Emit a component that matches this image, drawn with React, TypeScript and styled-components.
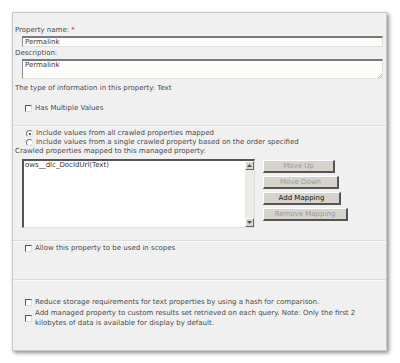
import React from "react";
import styled, { createGlobalStyle } from "styled-components";

const Global = createGlobalStyle`
  html, body { margin: 0; padding: 0; background: #ffffff; }
  body { font-family: "DejaVu Sans", Verdana, sans-serif; }
`;

const Page = styled.div`
  width: 400px;
  height: 363px;
  padding: 12px 0 0 12px;
  box-sizing: border-box;
`;

const Panel = styled.div`
  width: 375px;
  height: 339px;
  box-sizing: border-box;
  background: #f0f0f0;
  border: 1px solid #c8c8c8;
  box-shadow: 2px 2px 4px rgba(0, 0, 0, 0.45);
  display: flex;
  flex-direction: column;
  font-size: 7px;
  color: #4a4a4a;
  line-height: 9px;
`;

const Section = styled.div<{ $pt?: number; $h?: number }>`
  padding: ${(p) => p.$pt ?? 0}px 4px 0 2px;
  height: ${(p) => (p.$h ? `${p.$h}px` : "auto")};
  box-sizing: border-box;
  display: flex;
  flex-direction: column;
`;

const Sep = styled.div`
  height: 1px;
  background: #dcdcdc;
  border-bottom: 1px solid #fafafa;
`;

const Label = styled.div<{ $mt?: number }>`
  margin-top: ${(p) => p.$mt ?? 0}px;
  height: 9px;
  white-space: nowrap;
`;

const Req = styled.span`
  color: #d02020;
`;

const TextBox = styled.div<{ $h: number; $mt?: number }>`
  margin: ${(p) => p.$mt ?? 1}px 0 0 7px;
  width: 361px;
  height: ${(p) => p.$h}px;
  box-sizing: border-box;
  background: #fcfcfa;
  border-top: 2px solid #7a7a7a;
  border-left: 1px solid #8a8a8a;
  border-right: 1px solid #e2e2dc;
  border-bottom: 1px solid #e2e2dc;
  padding: 0 2px;
  color: #4a3c20;
  line-height: 8px;
  position: relative;
`;

const Grip = styled.svg`
  position: absolute;
  right: 0;
  bottom: 0;
`;

const CheckRow = styled.div<{ $mt?: number; $pl?: number }>`
  margin-top: ${(p) => p.$mt ?? 0}px;
  padding-left: ${(p) => p.$pl ?? 10}px;
  display: flex;
  align-items: center;
  gap: 3px;
  height: 9px;
  white-space: nowrap;
`;

const Box = styled.span`
  width: 7px;
  height: 7px;
  box-sizing: border-box;
  flex: none;
  background: #ffffff;
  border-top: 1px solid #555;
  border-left: 1px solid #555;
  border-right: 1px solid #dcdcdc;
  border-bottom: 1px solid #dcdcdc;
`;

const Radio = styled.span<{ $on?: boolean }>`
  width: 7px;
  height: 7px;
  box-sizing: border-box;
  flex: none;
  border-radius: 50%;
  background: #ffffff;
  border: 1px solid #777;
  border-right-color: #ddd;
  border-bottom-color: #ddd;
  position: relative;
  &::after {
    content: "";
    display: ${(p) => (p.$on ? "block" : "none")};
    position: absolute;
    left: 1.5px;
    top: 1.5px;
    width: 2px;
    height: 2px;
    border-radius: 50%;
    background: #222;
  }
`;

const MultiRow = styled.div`
  margin-top: 1px;
  padding-left: 10px;
  display: flex;
  align-items: center;
  gap: 3px;
  line-height: 10px;
`;

const MapArea = styled.div`
  margin: 3px 0 0 7px;
  display: flex;
  gap: 8px;
  align-items: flex-start;
`;

const ListBox = styled.div`
  width: 233px;
  height: 69px;
  box-sizing: border-box;
  background: #ffffff;
  border-top: 2px solid #555;
  border-left: 2px solid #555;
  border-right: 1px solid #e0e0e0;
  border-bottom: 1px solid #e0e0e0;
  display: flex;
`;

const ListItems = styled.div`
  flex: 1;
  padding: 0 1px;
  color: #333;
  line-height: 8px;
`;

const Scroll = styled.div`
  width: 9px;
  display: flex;
  flex-direction: column;
  justify-content: space-between;
  background: #ecebe6;
`;

const Arrow = styled.div`
  width: 9px;
  height: 9px;
  box-sizing: border-box;
  background: #d8d5ce;
  border-top: 1px solid #fff;
  border-left: 1px solid #fff;
  border-right: 1px solid #666;
  border-bottom: 1px solid #666;
  display: flex;
  align-items: center;
  justify-content: center;
`;

const Buttons = styled.div`
  margin-top: 1px;
  display: flex;
  flex-direction: column;
  gap: 3px;
  align-items: flex-start;
`;

const Btn = styled.div<{ $w: number; $off?: boolean }>`
  width: ${(p) => p.$w}px;
  height: 13px;
  box-sizing: border-box;
  background: #d6d3cc;
  border-top: 1px solid #ffffff;
  border-left: 1px solid #ffffff;
  border-right: 2px solid #555;
  border-bottom: 2px solid #555;
  color: ${(p) => (p.$off ? "#9a9a9a" : "#111")};
  font-size: 7px;
  line-height: 10px;
  text-align: center;
  white-space: nowrap;
`;

function Tri({ up }: { up?: boolean }) {
  return (
    <svg width="5" height="3" viewBox="0 0 5 3">
      <path d={up ? "M0 3 L2.5 0 L5 3 Z" : "M0 0 L2.5 3 L5 0 Z"} fill="#555" />
    </svg>
  );
}

export default function App() {
  return (
    <>
      <Global />
      <Page>
        <Panel>
          <Section $pt={13} $h={112}>
            <Label>
              Property name: <Req>*</Req>
            </Label>
            <TextBox $h={11}>Permalink</TextBox>
            <Label $mt={2}>Description:</Label>
            <TextBox $h={20}>
              Permalink
              <Grip width="5" height="5" viewBox="0 0 5 5">
                <path d="M1 5 L5 1 M3 5 L5 3" stroke="#999" strokeWidth="0.7" />
              </Grip>
            </TextBox>
            <Label $mt={5}>The type of information in this property: Text</Label>
            <CheckRow $mt={11}>
              <Box />
              Has Multiple Values
            </CheckRow>
          </Section>
          <Sep />
          <Section $pt={2} $h={113}>
            <CheckRow $pl={11}>
              <Radio $on />
              Include values from all crawled properties mapped
            </CheckRow>
            <CheckRow $pl={11}>
              <Radio />
              Include values from a single crawled property based on the order specified
            </CheckRow>
            <Label>Crawled properties mapped to this managed property:</Label>
            <MapArea>
              <ListBox>
                <ListItems>ows__dlc_DocIdUrl(Text)</ListItems>
                <Scroll>
                  <Arrow>
                    <Tri up />
                  </Arrow>
                  <Arrow>
                    <Tri />
                  </Arrow>
                </Scroll>
              </ListBox>
              <Buttons>
                <Btn $w={72} $off>
                  Move Up
                </Btn>
                <Btn $w={76} $off>
                  Move Down
                </Btn>
                <Btn $w={78}>Add Mapping</Btn>
                <Btn $w={85} $off>
                  Remove Mapping
                </Btn>
              </Buttons>
            </MapArea>
          </Section>
          <Sep />
          <Section $pt={2} $h={37}>
            <CheckRow>
              <Box />
              Allow this property to be used in scopes
            </CheckRow>
          </Section>
          <Sep />
          <Section $pt={17}>
            <CheckRow>
              <Box />
              Reduce storage requirements for text properties by using a hash for comparison.
            </CheckRow>
            <MultiRow>
              <Box />
              <span>
                Add managed property to custom results set retrieved on each query. Note: Only the first 2
                <br />
                kilobytes of data is available for display by default.
              </span>
            </MultiRow>
          </Section>
        </Panel>
      </Page>
    </>
  );
}
